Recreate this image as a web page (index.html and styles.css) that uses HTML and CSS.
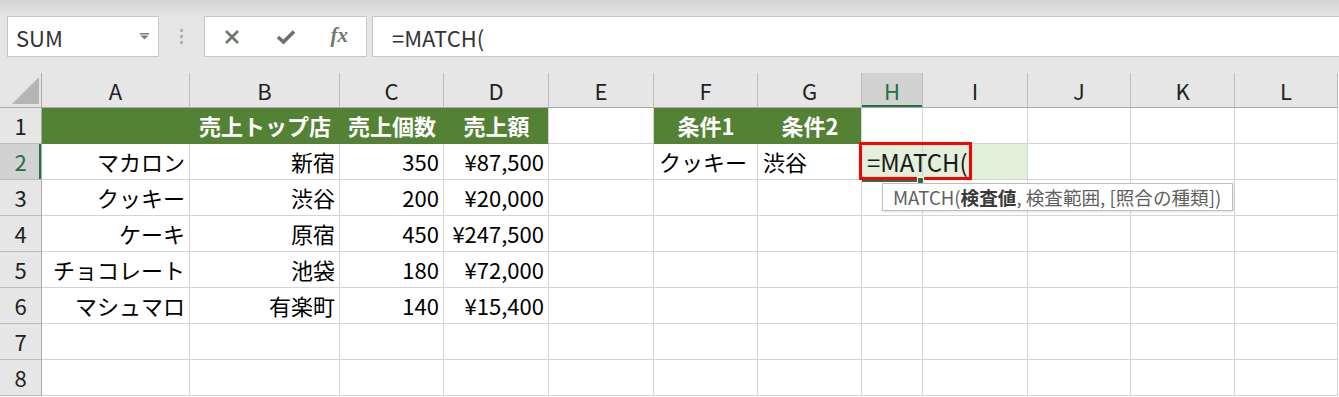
FILE: index.html
```html
<!DOCTYPE html>
<html lang="ja">
<head>
    <meta charset="UTF-8">
    <title>MATCH</title>
    <link rel="stylesheet" href="styles.css">
</head>
<body>
    <div class="top">
        <div class="top-edge"></div>
        <div class="formula-bar">
            <div class="name-box">
                <span>SUM</span>
                <svg width="9" height="7" viewBox="0 0 9 7"><rect x="0" y="0" width="9" height="1.5" fill="#7a7a7a"/><polygon points="0.5,2.5 8.5,2.5 4.5,6.5" fill="#7a7a7a"/></svg>
            </div>
            <div class="grip"><i></i><i></i><i></i></div>
            <div class="fx-box">
                <span>
                    <svg width="16" height="16" viewBox="0 0 16 16"><path d="M2 2 L14 14 M14 2 L2 14" stroke="#6c786c" stroke-width="2.6" fill="none"/></svg>
                </span>
                <span>
                    <svg width="20" height="16" viewBox="0 0 20 16"><path d="M2 8 L7.5 13 L18 2.5" stroke="#6e6e6e" stroke-width="3.6" fill="none"/></svg>
                </span>
                <span class="fx">fx</span>
            </div>
            <div class="formula">=MATCH(</div>
        </div>
    </div>

    <div class="sheet">
        <div class="corner"><svg width="42" height="35" viewBox="0 0 42 35"><polygon points="39,4 39,31 12,31" fill="#b5b5b5"/></svg></div>
        <div class="col-h">A</div>
        <div class="col-h">B</div>
        <div class="col-h">C</div>
        <div class="col-h">D</div>
        <div class="col-h">E</div>
        <div class="col-h">F</div>
        <div class="col-h">G</div>
        <div class="col-h sel">H</div>
        <div class="col-h">I</div>
        <div class="col-h">J</div>
        <div class="col-h">K</div>
        <div class="col-h">L</div>

        <div class="row-h">1</div>
        <div class="c hd"></div>
        <div class="c hd">売上トップ店</div>
        <div class="c hd">売上個数</div>
        <div class="c hd end">売上額</div>
        <div class="c"></div>
        <div class="c hd">条件1</div>
        <div class="c hd end">条件2</div>
        <div class="c"></div>
        <div class="c"></div>
        <div class="c"></div>
        <div class="c"></div>
        <div class="c"></div>

        <div class="row-h sel">2</div>
        <div class="c r">マカロン</div>
        <div class="c r">新宿</div>
        <div class="c r">350</div>
        <div class="c r">¥87,500</div>
        <div class="c"></div>
        <div class="c">クッキー</div>
        <div class="c">渋谷</div>
        <div class="c active">
            =MATCH(
            <div class="mark"></div>
            <div class="handle"></div>
            <div class="tip">MATCH(<b>検査値</b>, 検査範囲, [照合の種類])</div>
        </div>
        <div class="c tint"></div>
        <div class="c"></div>
        <div class="c"></div>
        <div class="c"></div>

        <div class="row-h">3</div>
        <div class="c r">クッキー</div>
        <div class="c r">渋谷</div>
        <div class="c r">200</div>
        <div class="c r">¥20,000</div>
        <div class="c"></div><div class="c"></div><div class="c"></div><div class="c"></div>
        <div class="c"></div><div class="c"></div><div class="c"></div><div class="c"></div>

        <div class="row-h">4</div>
        <div class="c r">ケーキ</div>
        <div class="c r">原宿</div>
        <div class="c r">450</div>
        <div class="c r">¥247,500</div>
        <div class="c"></div><div class="c"></div><div class="c"></div><div class="c"></div>
        <div class="c"></div><div class="c"></div><div class="c"></div><div class="c"></div>

        <div class="row-h">5</div>
        <div class="c r">チョコレート</div>
        <div class="c r">池袋</div>
        <div class="c r">180</div>
        <div class="c r">¥72,000</div>
        <div class="c"></div><div class="c"></div><div class="c"></div><div class="c"></div>
        <div class="c"></div><div class="c"></div><div class="c"></div><div class="c"></div>

        <div class="row-h">6</div>
        <div class="c r">マシュマロ</div>
        <div class="c r">有楽町</div>
        <div class="c r">140</div>
        <div class="c r">¥15,400</div>
        <div class="c"></div><div class="c"></div><div class="c"></div><div class="c"></div>
        <div class="c"></div><div class="c"></div><div class="c"></div><div class="c"></div>

        <div class="row-h">7</div>
        <div class="c"></div><div class="c"></div><div class="c"></div><div class="c"></div>
        <div class="c"></div><div class="c"></div><div class="c"></div><div class="c"></div>
        <div class="c"></div><div class="c"></div><div class="c"></div><div class="c"></div>

        <div class="row-h">8</div>
        <div class="c"></div><div class="c"></div><div class="c"></div><div class="c"></div>
        <div class="c"></div><div class="c"></div><div class="c"></div><div class="c"></div>
        <div class="c"></div><div class="c"></div><div class="c"></div><div class="c"></div>
    </div>
</body>
</html>
```

FILE: styles.css
```css
:root {
    --bar-bg: #e6e6e6;
    --box-border: #c6c6c6;
    --grid-line: #d4d4d4;
    --head-line: #bcbcbc;
    --excel-green: #217346;
    --fill-green: #548235;
}

body {
    margin: 0;
    background: #fff;
    color: #000;
    font-family: "Noto Sans CJK JP", "Noto Sans", sans-serif;
    overflow: hidden;
}

/* formula bar */
.top {
    height: 73px;
    background: var(--bar-bg);
}

.top-edge {
    height: 16px;
    background: linear-gradient(#d3d3d3, #e4e4e4);
}

.formula-bar {
    display: flex;
    height: 41px;
    padding-left: 7px;
}

.name-box {
    width: 152px;
    box-sizing: border-box;
    display: flex;
    align-items: center;
    justify-content: space-between;
    padding: 0 9px 0 8px;
    background: #fff;
    border: 1px solid var(--box-border);
    font-size: 22px;
    color: #333;
}

.grip {
    width: 45px;
    display: flex;
    flex-direction: column;
    align-items: center;
    justify-content: center;
    gap: 3px;
}

.grip i {
    width: 3px;
    height: 3px;
    background: #b3b3b3;
}

.fx-box {
    width: 163px;
    box-sizing: border-box;
    display: flex;
    background: #fff;
    border: 1px solid var(--box-border);
}

.fx-box span {
    flex: 1;
    display: flex;
    align-items: center;
    justify-content: center;
}

.fx-box .fx {
    font-family: "Liberation Serif", serif;
    font-style: italic;
    font-weight: bold;
    font-size: 21px;
    color: #6c786c;
    padding-bottom: 2px;
}

.formula {
    flex: 1;
    margin-left: 5px;
    display: flex;
    align-items: center;
    padding-left: 19px;
    background: #fff;
    border: 1px solid var(--box-border);
    border-right: none;
    font-size: 22px;
    color: #333;
}

/* sheet */
.sheet {
    display: grid;
    grid-template-columns: 42px 148px 150px 104px 105px 105px 104px 104px 61px 105px 103px 104px 103px;
    grid-template-rows: 35px repeat(8, 36px);
    font-size: 22px;
}

.corner {
    background: var(--bar-bg);
    border-right: 1px solid #ababab;
    border-bottom: 1px solid #ababab;
    box-sizing: border-box;
}

.corner svg {
    display: block;
}

.col-h,
.row-h {
    box-sizing: border-box;
    background: var(--bar-bg);
    color: #222;
    text-align: center;
}

.col-h {
    line-height: 34px;
    border-right: 1px solid var(--head-line);
    border-bottom: 1px solid #ababab;
}

.row-h {
    line-height: 35px;
    border-right: 1px solid #ababab;
    border-bottom: 1px solid var(--head-line);
}

.col-h.sel {
    background: #d2d2d2;
    color: var(--excel-green);
    box-shadow: inset 0 -2px 0 var(--excel-green);
}

.row-h.sel {
    background: #d2d2d2;
    color: var(--excel-green);
    box-shadow: inset -2px 0 0 var(--excel-green);
}

.c {
    box-sizing: border-box;
    padding: 0 4px 0 5px;
    line-height: 35px;
    white-space: nowrap;
    border-right: 1px solid var(--grid-line);
    border-bottom: 1px solid var(--grid-line);
}

.c.r {
    text-align: right;
}

.c.hd {
    background: var(--fill-green);
    border-color: var(--fill-green);
    color: #fff;
    font-weight: bold;
    text-align: center;
}

.c.hd.end {
    border-right-color: var(--grid-line);
}

.c.tint {
    background: #e2efda;
}

.c.active {
    position: relative;
    z-index: 1;
    background: #e2efda;
    font-size: 24px;
    color: #1a1a1a;
    overflow: visible;
    box-shadow: 0 2px 0 var(--excel-green);
}

.active .mark {
    position: absolute;
    left: -3px;
    top: -2px;
    width: 113px;
    height: 38px;
    box-sizing: border-box;
    border: 3px solid #ff0000;
}

.active .handle {
    position: absolute;
    right: -2px;
    bottom: -5px;
    width: 5px;
    height: 5px;
    background: var(--excel-green);
    border: 1px solid #fff;
}

.active .tip {
    position: absolute;
    left: 20px;
    top: 39px;
    width: 351px;
    height: 28px;
    box-sizing: border-box;
    padding-left: 10px;
    background: #fff;
    border: 1px solid #bebebe;
    box-shadow: 1px 1px 2px rgba(0, 0, 0, 0.12);
    font-size: 18.6px;
    line-height: 26px;
    color: #5f5f5f;
}

.active .tip b {
    color: #3a3a3a;
}
```
